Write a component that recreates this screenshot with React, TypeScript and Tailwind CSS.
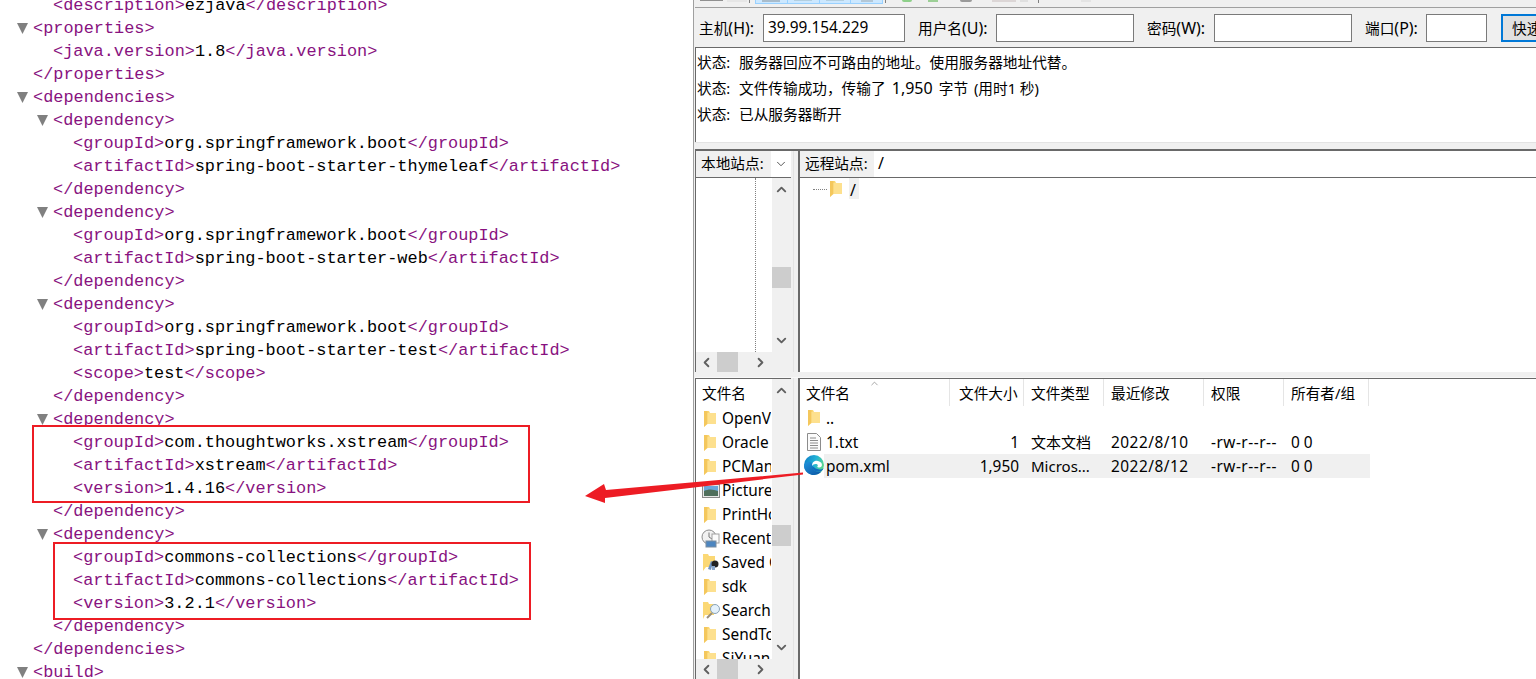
import { ChevronDown, ChevronLeft, ChevronRight, ChevronUp } from 'lucide-react';

type Line = { indent: number; arrow?: boolean; open?: string; text?: string; close?: string };

const xmlLines: Line[] = [
  { indent: 1, open: 'description', text: 'ezjava', close: 'description' },
  { indent: 0, arrow: true, open: 'properties' },
  { indent: 1, open: 'java.version', text: '1.8', close: 'java.version' },
  { indent: 0, close: 'properties' },
  { indent: 0, arrow: true, open: 'dependencies' },
  { indent: 1, arrow: true, open: 'dependency' },
  { indent: 2, open: 'groupId', text: 'org.springframework.boot', close: 'groupId' },
  { indent: 2, open: 'artifactId', text: 'spring-boot-starter-thymeleaf', close: 'artifactId' },
  { indent: 1, close: 'dependency' },
  { indent: 1, arrow: true, open: 'dependency' },
  { indent: 2, open: 'groupId', text: 'org.springframework.boot', close: 'groupId' },
  { indent: 2, open: 'artifactId', text: 'spring-boot-starter-web', close: 'artifactId' },
  { indent: 1, close: 'dependency' },
  { indent: 1, arrow: true, open: 'dependency' },
  { indent: 2, open: 'groupId', text: 'org.springframework.boot', close: 'groupId' },
  { indent: 2, open: 'artifactId', text: 'spring-boot-starter-test', close: 'artifactId' },
  { indent: 2, open: 'scope', text: 'test', close: 'scope' },
  { indent: 1, close: 'dependency' },
  { indent: 1, arrow: true, open: 'dependency' },
  { indent: 2, open: 'groupId', text: 'com.thoughtworks.xstream', close: 'groupId' },
  { indent: 2, open: 'artifactId', text: 'xstream', close: 'artifactId' },
  { indent: 2, open: 'version', text: '1.4.16', close: 'version' },
  { indent: 1, close: 'dependency' },
  { indent: 1, arrow: true, open: 'dependency' },
  { indent: 2, open: 'groupId', text: 'commons-collections', close: 'groupId' },
  { indent: 2, open: 'artifactId', text: 'commons-collections', close: 'artifactId' },
  { indent: 2, open: 'version', text: '3.2.1', close: 'version' },
  { indent: 1, close: 'dependency' },
  { indent: 0, close: 'dependencies' },
  { indent: 0, arrow: true, open: 'build' },
];

const indentClass = ['pl-[33px]', 'pl-[53px]', 'pl-[73px]'];

function XmlRow({ line }: { line: Line }) {
  return (
    <div className={`relative h-[23px] leading-[23px] whitespace-pre ${indentClass[line.indent]}`}>
      {line.arrow && (
        <svg
          viewBox="0 0 10 10"
          className={`absolute top-[6px] w-[11px] h-[11px] ${line.indent === 0 ? 'left-[17px]' : 'left-[37px]'}`}
        >
          <polygon points="0,0 10,0 5,10" fill="#808080" />
        </svg>
      )}
      {line.open && <span className="text-[#881280]">{`<${line.open}>`}</span>}
      {line.text && <span className="text-black">{line.text}</span>}
      {line.close && <span className="text-[#881280]">{`</${line.close}>`}</span>}
    </div>
  );
}

function Folder() {
  return (
    <svg viewBox="0 0 14 18" className="w-[14px] h-[18px] shrink-0">
      <path d="M1 1h5l1 2h6v11H3l-2 3z" fill="#fbd875" />
      <path d="M1 1h3.5v13L1 17z" fill="#f4c75c" />
      <path d="M4.500 3H13v11H4.500z" fill="#fde08e" />
    </svg>
  );
}

function PictureIcon() {
  return (
    <svg viewBox="0 0 18 16" className="w-[18px] h-[16px] shrink-0 -ml-[1px] mr-[-3px]">
      <rect x="0.5" y="1.5" width="17" height="13" fill="#e8e8e8" stroke="#8a8a8a" />
      <rect x="2" y="3" width="14" height="5" fill="#6aa6dc" />
      <path d="M2 8c4-2 9-2 14 0v5H2z" fill="#4f6f5c" />
    </svg>
  );
}

function RecentIcon() {
  return (
    <svg viewBox="0 0 20 20" className="w-[20px] h-[20px] shrink-0 -ml-[2px] mr-[-4px]">
      <circle cx="8" cy="8" r="7" fill="#f1f1f1" stroke="#8c8c8c" />
      <path d="M8 3.500V8l3 2" fill="none" stroke="#777777" />
      <rect x="11" y="5" width="7" height="9" fill="#fbfbfb" stroke="#a0a0a0" />
      <rect x="5" y="12" width="10" height="6" fill="#4d86c0" stroke="#7a8da0" />
    </svg>
  );
}

function SavedIcon() {
  return (
    <svg viewBox="0 0 18 18" className="w-[18px] h-[18px] shrink-0 mr-[-4px]">
      <path d="M0 0h5l1 2h6v11H3l-3 4z" fill="#fbd875" />
      <path d="M5 15l3-8 2 1-2 8z" fill="#6d93c4" />
      <circle cx="12" cy="10" r="3.500" fill="#222222" />
      <rect x="9" y="12" width="3" height="4" fill="#8aa8cc" />
    </svg>
  );
}

function SearchIcon() {
  return (
    <svg viewBox="0 0 18 18" className="w-[18px] h-[18px] shrink-0 mr-[-4px]">
      <path d="M0 0h5l1 2h5v11H2l-2 4z" fill="#fbd875" />
      <circle cx="12" cy="7" r="4.500" fill="#e4f1fb" stroke="#8aa3b8" />
      <path d="M9 11l-5 5" stroke="#9a8f7c" strokeWidth="2" />
    </svg>
  );
}

function TextFile() {
  return (
    <svg viewBox="0 0 14 18" className="w-[14px] h-[18px]">
      <path d="M0.500 0.500h9l4 4v13h-13z" fill="#fbfbfb" stroke="#8c8c8c" />
      <path d="M3 5h6M3 7.500h8M3 10h8M3 12.500h8M3 15h8" stroke="#8c8c8c" />
    </svg>
  );
}

function EdgeIcon() {
  return (
    <svg viewBox="0 0 22 22" className="w-[22px] h-[22px] -mt-[2px]">
      <defs>
        <linearGradient id="edgeTop" x1="0" y1="0.2" x2="1" y2="0.5">
          <stop offset="0" stopColor="#0f7fc8" />
          <stop offset="0.55" stopColor="#22b2d6" />
          <stop offset="1" stopColor="#5fd98a" />
        </linearGradient>
        <linearGradient id="edgeLow" x1="0" y1="0" x2="0.8" y2="1">
          <stop offset="0" stopColor="#1f93dc" />
          <stop offset="1" stopColor="#0d5aa8" />
        </linearGradient>
      </defs>
      <circle cx="11" cy="11" r="11" fill="url(#edgeTop)" />
      <path d="M0 12C2 7 8 6 9 10c0 5 3 10 10 8.500C16.500 21 13.500 22 11 22 5 22 0 17 0 12z" fill="url(#edgeLow)" />
      <path d="M9 12c-.5-4 3-6 6-5.500 3.500.5 5.500 3 4.500 5.500-1 2-4.500 2.500-5 1 1.500-1 .5-3-1.500-3s-3.500 1-4 2z" fill="#ffffff" />
      <path d="M9 12c.5 4 4 7 8 6.500 2-.5 4-2 4.500-4-1.500 1.500-4.500 2-7 1C12 14.500 10.500 13 9 12z" fill="#0f6cbd" />
    </svg>
  );
}

function VScroll({ thumb, top }: { thumb: string; top: string }) {
  return (
    <div className="relative w-[19px] h-full bg-[#f0f0f0] flex flex-col items-center justify-between">
      <ChevronUp size={15} strokeWidth={3} className={`text-[#606060] ${top}`} />
      <div className={`absolute left-0 w-[19px] h-[21px] bg-[#cdcdcd] ${thumb}`} />
      <ChevronDown size={15} strokeWidth={3} className="text-[#606060] mb-[4px]" />
    </div>
  );
}

function HScroll() {
  return (
    <div className="h-[20px] w-[96px] shrink-0 bg-[#f0f0f0] flex items-center">
      <ChevronLeft size={15} strokeWidth={3} className="text-[#606060] ml-[3px]" />
      <div className="w-[21px] h-[20px] bg-[#cdcdcd] ml-[3px]" />
      <ChevronRight size={15} strokeWidth={3} className="text-[#606060] ml-[15px]" />
    </div>
  );
}

function Field({ width, value }: { width: string; value?: string }) {
  return (
    <div className={`h-[28px] shrink-0 border border-[#7a7a7a] bg-white pl-[4px] leading-[26px] text-[15.4px] text-black ${width}`}>{value}</div>
  );
}

function Label({ width, cjk, latin }: { width: string; cjk: string; latin: string }) {
  return (
    <span className={`shrink-0 whitespace-nowrap ${width}`}>
      {cjk}
      <span className="text-[16px]">{latin}</span>
    </span>
  );
}

const localItems = [
  { name: 'OpenVPN', icon: <Folder /> },
  { name: 'Oracle', icon: <Folder /> },
  { name: 'PCManager', icon: <Folder /> },
  { name: 'Pictures', icon: <PictureIcon /> },
  { name: 'PrintHood', icon: <Folder /> },
  { name: 'Recent', icon: <RecentIcon /> },
  { name: 'Saved Games', icon: <SavedIcon /> },
  { name: 'sdk', icon: <Folder /> },
  { name: 'Searches', icon: <SearchIcon /> },
  { name: 'SendTo', icon: <Folder /> },
  { name: 'SiYuan', icon: <Folder /> },
];

const headers = [
  { label: '文件大小', cls: 'w-[74px] pl-[9px]' },
  { label: '文件类型', cls: 'w-[80px] pl-[7px]' },
  { label: '最近修改', cls: 'w-[100px] pl-[7px]' },
  { label: '权限', cls: 'w-[80px] pl-[7px]' },
  { label: '所有者/组', cls: 'w-[85px] pl-[7px]' },
];

const files = [
  { name: '..', icon: <Folder />, size: '', type: '', date: '', perm: '', owner: '', hl: false },
  { name: '1.txt', icon: <TextFile />, size: '1', type: '文本文档', date: '2022/8/10', perm: '-rw-r--r--', owner: '0 0', hl: false },
  { name: 'pom.xml', icon: <EdgeIcon />, size: '1,950', type: 'Micros...', date: '2022/8/12', perm: '-rw-r--r--', owner: '0 0', hl: true },
];

export default function App() {
  return (
    <div className="relative flex w-full h-[679px] overflow-hidden bg-white font-['Noto_Sans','Noto_Sans_CJK_SC',sans-serif] text-[14.67px] text-black">
      {/* xml view */}
      <div className="relative w-[693px] shrink-0 -mt-[6px] font-['Liberation_Mono',monospace] text-[16.9px]">
        {xmlLines.map((line, i) => (
          <XmlRow key={i} line={line} />
        ))}
        <div className="absolute left-[32px] top-[431px] w-[498px] h-[78px] border-2 border-[#ed1c24]" />
        <div className="absolute left-[53px] top-[548px] w-[478px] h-[78px] border-2 border-[#ed1c24]" />
      </div>

      {/* ftp client */}
      <div className="flex-1 min-w-0 flex flex-col border-l border-[#a0a0a0] bg-[#f0f0f0] pl-[1px]">
        {/* toolbar, cut off by the top of the picture */}
        <div className="h-[8px] shrink-0 border-b border-[#a0a0a0] flex items-start overflow-hidden">
          <div className="w-[23px] h-[1px] bg-[#909090] ml-[5px]" />
          <div className="w-[20px] h-[2px] bg-[#e6e6e6] ml-[4px]" />
          <div className="w-px h-[3px] bg-[#808080] ml-[2px]" />
          <div className="flex w-[128px] h-[4px] ml-[5px] bg-[#cce8ff] border-b border-x border-[#99d1ff] divide-x divide-[#99d1ff]">
            <div className="flex-1 flex justify-center"><div className="w-[18px] h-[2px] bg-[#a9bccb]" /></div>
            <div className="flex-1 flex justify-center"><div className="w-[18px] h-px bg-[#b3cfe0]" /></div>
            <div className="flex-1 flex justify-center"><div className="w-[18px] h-px bg-[#b3cfe0]" /></div>
            <div className="flex-1 flex justify-center"><div className="w-[12px] h-[2px] bg-[#b3c7d6]" /></div>
          </div>
          <div className="w-px h-[3px] bg-[#808080] ml-[2px]" />
          <div className="w-[10px] h-[2px] rounded-b-full bg-[#8ed08a] ml-[16px]" />
          <div className="w-[10px] h-[2px] bg-[#9ccf96] ml-[16px]" />
          <div className="w-[12px] h-[2px] rounded-b-full bg-[#9a9a9a] ml-[22px]" />
          <div className="w-[24px] h-[2px] bg-[#dcd6d6] ml-[20px]" />
          <div className="w-[8px] h-[2px] bg-[#e0e0e0] ml-[4px]" />
          <div className="w-px h-[3px] bg-[#808080] ml-[10px]" />
          <div className="w-[10px] h-[2px] bg-[#e4e4e4] ml-[42px]" />
        </div>

        {/* quick connect */}
        <div className="h-[39px] shrink-0 flex items-center pl-[4px] overflow-hidden">
          <Label width="w-[64px]" cjk="主机" latin="(H):" />
          <Field width="w-[142px]" value="39.99.154.229" />
          <Label width="ml-[13px] w-[78px]" cjk="用户名" latin="(U):" />
          <Field width="w-[138px]" />
          <Label width="ml-[13px] w-[67px]" cjk="密码" latin="(W):" />
          <Field width="w-[138px]" />
          <Label width="ml-[13px] w-[61px]" cjk="端口" latin="(P):" />
          <Field width="w-[61px]" />
          <div className="ml-[14px] w-[80px] h-[28px] shrink-0 border-2 border-[#0078d7] bg-[#e1e1e1] pl-[9px] leading-[25px] whitespace-nowrap">快速连接</div>
        </div>

        {/* message log */}
        <div className="h-[95px] shrink-0 border-t border-l border-[#696969] bg-white pl-[1px] pt-[1px]">
          <div className="flex h-[26px] leading-[26px]"><span className="w-[42px]">状态:</span><span>服务器回应不可路由的地址。使用服务器地址代替。</span></div>
          <div className="flex h-[26px] leading-[26px]">
            <span className="w-[42px]">状态:</span>
            <span className="whitespace-pre">
              文件传输成功，传输了<span className="text-[16px] mx-[2px]"> 1,950 </span>字节<span className="ml-[2px]"> (用时1 秒)</span>
            </span>
          </div>
          <div className="flex h-[26px] leading-[26px]"><span className="w-[42px]">状态:</span><span>已从服务器断开</span></div>
        </div>

        {/* splitter */}
        <div className="h-[9px] shrink-0 border-t border-[#e3e3e3] border-b-2 border-b-[#696969]" />

        {/* site panes */}
        <div className="h-[221px] shrink-0 flex">
          <div className="w-[96px] shrink-0 flex flex-col border-l border-[#696969]">
            <div className="h-[27px] shrink-0 flex border-b border-[#696969]">
              <div className="w-[74px] pl-[5px] leading-[24px] whitespace-nowrap">本地站点:</div>
              <div className="flex-1 ml-px bg-white flex items-center justify-center">
                <ChevronDown size={14} strokeWidth={1.5} className="text-[#404040]" />
              </div>
            </div>
            <div className="flex-1 min-h-0 flex">
              <div className="w-[76px] bg-white">
                <div className="w-[60px] h-full border-r border-dotted border-[#808080]" />
              </div>
              <VScroll thumb="top-[89px]" top="mt-[4px]" />
            </div>
            <HScroll />
          </div>
          <div className="w-[8px] shrink-0 pl-[2px]"><div className="w-px h-full bg-[#e3e3e3]" /></div>
          <div className="flex-1 min-w-0 flex flex-col border-l-2 border-[#696969] bg-white -ml-[1px]">
            <div className="h-[27px] shrink-0 flex border-b border-[#696969]">
              <div className="w-[74px] pl-[5px] bg-[#f0f0f0] leading-[24px] whitespace-nowrap">远程站点:</div>
              <div className="pl-[4px] leading-[24px] text-[16px]">/</div>
            </div>
            <div className="flex items-start pl-[13px]">
              <div className="w-[14px] mt-[11px] border-t border-dotted border-[#808080]" />
              <div className="ml-[2px] mt-[2px]"><Folder /></div>
              <div className="ml-[6px] pl-[1px] w-[10px] h-[21px] bg-[#f0f0f0] leading-[24px] text-[16px]">/</div>
            </div>
          </div>
        </div>

        {/* splitter */}
        <div className="h-[6px] shrink-0 border-b border-[#f8f8f8]" />

        {/* file panes */}
        <div className="flex-1 min-h-0 flex border-t-0">
          <div className="w-[96px] shrink-0 flex flex-col border-l border-t border-[#696969]">
            <div className="flex-1 min-h-0 flex">
              <div className="w-[75px] bg-white overflow-hidden">
                <div className="h-[28px] pl-[6px] leading-[28px]">文件名</div>
                {localItems.map((item) => (
                  <div key={item.name} className="h-[24px] flex items-center pl-[7px] overflow-hidden whitespace-nowrap text-[15.4px]">
                    <div className="w-[19px] shrink-0 flex">{item.icon}</div>
                    <span>{item.name}</span>
                  </div>
                ))}
              </div>
              <div className="w-px bg-white" />
              <VScroll thumb="top-[146px]" top="mt-[4px]" />
            </div>
            <HScroll />
          </div>
          <div className="w-[8px] shrink-0 pl-[2px]"><div className="w-px h-full bg-[#e3e3e3]" /></div>
          <div className="flex-1 min-w-0 border-l-2 border-t border-[#696969] bg-white -ml-[1px]">
            <div className="relative flex h-[27px] leading-[28px] whitespace-nowrap">
              <div className="w-[150px] pl-[6px] border-r border-[#e5e5e5]">文件名</div>
              <ChevronUp size={11} strokeWidth={1.5} className="absolute left-[69px] -top-[1px] text-[#808080]" />
              {headers.map((h) => (
                <div key={h.label} className={`${h.cls} border-r border-[#e5e5e5]`}>{h.label}</div>
              ))}
            </div>
            {files.map((f) => (
              <div key={f.name} className="flex h-[24px] w-[570px] leading-[25px] whitespace-nowrap text-[15.4px]">
                <div className="w-[24px] shrink-0 flex items-center justify-center pl-[4px]">{f.icon}</div>
                <div className={`flex flex-1 ${f.hl ? 'bg-[#f0f0f0]' : ''}`}>
                  <div className="w-[126px] pl-[2px]">{f.name}</div>
                  <div className="w-[69px] text-right">{f.size}</div>
                  <div className="w-[92px] pl-[12px] text-[15px]">{f.type}</div>
                  <div className="w-[100px] tracking-[0.5px]">{f.date}</div>
                  <div className="w-[80px] tracking-[0.5px]">{f.perm}</div>
                  <div>{f.owner}</div>
                </div>
              </div>
            ))}
          </div>
        </div>
      </div>

      {/* annotation arrow */}
      <svg viewBox="0 0 1536 679" className="absolute inset-0 w-[1536px] h-[679px] pointer-events-none">
        <polygon points="803,472.500 803,474.500 605,498 605,503 585,496 604,484 606,490" fill="#ed1c24" />
      </svg>
    </div>
  );
}
